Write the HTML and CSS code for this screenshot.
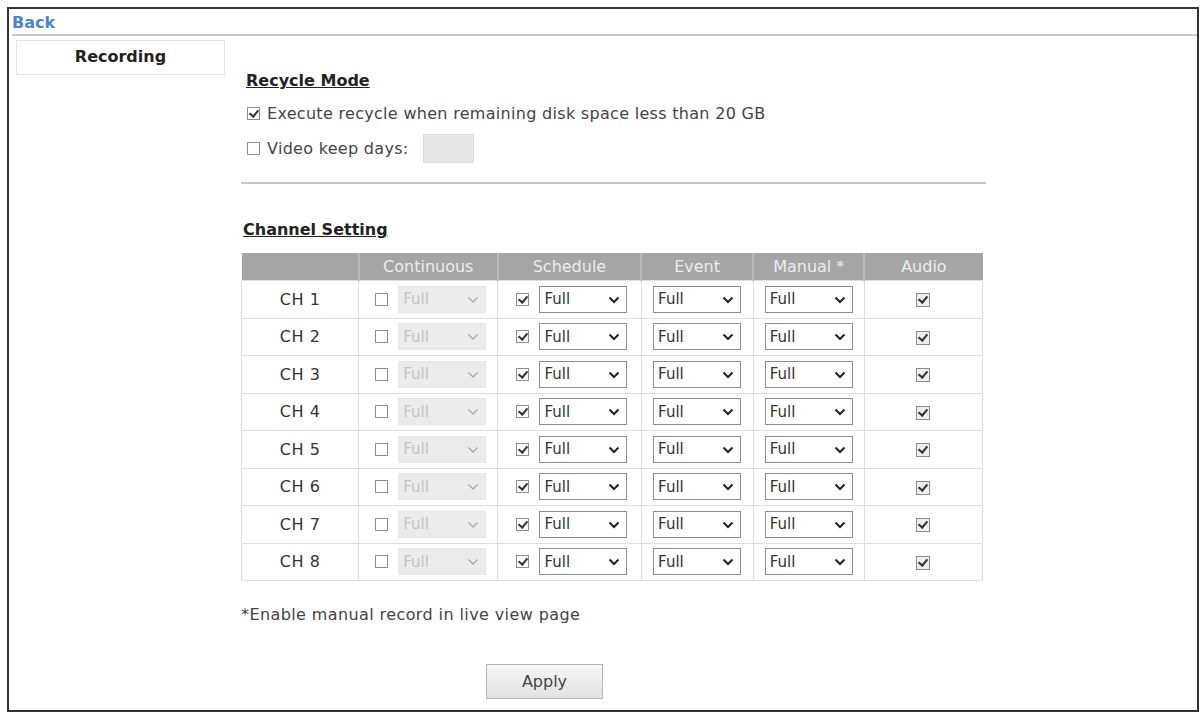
FILE: index.html
```html
<!DOCTYPE html>
<html lang="en">

<head>
    <meta charset="UTF-8">
    <title>Recording</title>
    <link rel="stylesheet" href="styles.css">
</head>

<body>
    <div class="frame">
        <!-- Top bar -->
        <div class="topbar">
            <a href="#" class="back">Back</a>
        </div>

        <div class="layout">
            <!-- Side menu -->
            <div class="sidebar">
                <div class="menuItem">Recording</div>
            </div>

            <!-- Main content -->
            <div class="content">
                <h3 class="sectionTitle">Recycle Mode</h3>
                <div class="option first">
                    <input type="checkbox" class="check" checked>
                    <span>Execute recycle when remaining disk space less than 20 GB</span>
                </div>
                <div class="option">
                    <input type="checkbox" class="check">
                    <span>Video keep days:</span>
                    <input type="text" class="daysInput" disabled>
                </div>

                <hr class="divider">

                <h3 class="sectionTitle channelTitle">Channel Setting</h3>
                <table class="channels">
                    <thead>
                        <tr>
                            <th class="colCh"></th>
                            <th class="colCont">Continuous</th>
                            <th class="colSched">Schedule</th>
                            <th class="colEvent">Event</th>
                            <th class="colManual">Manual *</th>
                            <th class="colAudio">Audio</th>
                        </tr>
                    </thead>
                    <tbody id="channelRows">
                    </tbody>
                </table>

                <p class="note">*Enable manual record in live view page</p>

                <div class="actions">
                    <button type="button" class="applyBtn">Apply</button>
                </div>
            </div>
        </div>
    </div>

    <script>
        // Build the 8 channel rows
        const rows = document.getElementById("channelRows");
        const arrow = '<svg class="arrow" width="12" height="8" viewBox="0 0 12 8"><path d="M1.5 1.5 L6 6 L10.5 1.5" fill="none" stroke="currentColor" stroke-width="2"/></svg>';

        function selectBox(disabled) {
            return `<span class="selWrap${disabled ? " off" : ""}">
                <select class="sel"${disabled ? " disabled" : ""}><option>Full</option></select>${arrow}
            </span>`;
        }

        for (let i = 1; i <= 8; i++) {
            const tr = document.createElement("tr");
            tr.innerHTML = `
                <td>CH ${i}</td>
                <td class="pair"><input type="checkbox" class="check">${selectBox(true)}</td>
                <td class="pair"><input type="checkbox" class="check" checked>${selectBox(false)}</td>
                <td>${selectBox(false)}</td>
                <td>${selectBox(false)}</td>
                <td><input type="checkbox" class="check audio" checked></td>
            `;
            rows.appendChild(tr);
        }
    </script>
</body>

</html>
```

FILE: styles.css
```css
/* General */
body {
    margin: 0;
    background-color: #fff;
    font-family: "DejaVu Sans", Verdana, sans-serif;
    font-size: 16px;
    color: #333;
}

.frame {
    margin: 7px 2px 3px 7px;
    height: 705px;
    border: 2px solid #333;
    box-sizing: border-box;
    display: flex;
    flex-direction: column;
}

/* Top bar */
.topbar {
    height: 23px;
    margin-left: 3px;
    border-bottom: 2px solid #c9c9c9;
    display: flex;
    align-items: flex-end;
    padding-bottom: 2px;
}

.back {
    color: #4a86c4;
    font-weight: bold;
    font-size: 16px;
    text-decoration: none;
    line-height: 18px;
}

.layout {
    display: flex;
    flex: 1;
}

/* Side menu */
.sidebar {
    width: 209px;
    margin: 4px 0 0 7px;
}

.menuItem {
    height: 35px;
    box-sizing: border-box;
    border: 1px solid #e2e2e2;
    text-align: center;
    font-weight: bold;
    line-height: 32px;
    color: #222;
}

/* Content */
.content {
    margin-left: 16px;
    width: 744px;
    display: flex;
    flex-direction: column;
}

.sectionTitle {
    margin: 35px 0 0 5px;
    font-size: 16px;
    font-weight: bold;
    text-decoration: underline;
    color: #222;
    line-height: 20px;
}

.option {
    display: flex;
    align-items: center;
    margin-left: 6px;
    height: 35px;
    color: #444;
    letter-spacing: 0.3px;
}

.option.first {
    margin-top: 5px;
}

.option span {
    margin-left: 7px;
}

.daysInput {
    width: 51px;
    height: 29px;
    margin-left: 14px;
    box-sizing: border-box;
    border: 1px solid #ddd;
    background-color: #e6e6e6;
}

.divider {
    margin: 16px 0 0 0;
    border: none;
    border-top: 2px solid #c9c9c9;
    width: 745px;
}

.channelTitle {
    margin-top: 36px;
    margin-left: 2px;
}

/* Checkboxes */
.check {
    appearance: none;
    width: 13px;
    height: 13px;
    margin: 0;
    border: 1px solid #8c8c8c;
    background-color: #fff;
    position: relative;
    vertical-align: middle;
}

.check:checked::after {
    content: "";
    position: absolute;
    left: 3px;
    top: 0px;
    width: 4px;
    height: 7px;
    border: solid #333;
    border-width: 0 2px 2px 0;
    transform: rotate(40deg);
}

/* Table */
.channels {
    margin-top: 13px;
    width: 742px;
    border-collapse: collapse;
    table-layout: fixed;
}

.channels th {
    height: 27px;
    padding: 0;
    background-color: #a5a5a5;
    color: #ececec;
    font-weight: normal;
    font-size: 16px;
    border-left: 2px solid #bababa;
}

.channels th:first-child {
    border-left: none;
}

.channels td {
    height: 36.5px;
    padding: 0;
    text-align: center;
    border: 1px solid #dedede;
    color: #333;
    letter-spacing: 0.6px;
}

.channels td.pair {
    padding-left: 5px;
}

.colCh { width: 116px; }
.colCont { width: 137px; }
.colSched { width: 141px; }
.colEvent { width: 110px; }
.colManual { width: 109px; }
.colAudio { width: 117px; }

.channels td .check + .selWrap {
    margin-left: 10px;
}

.selWrap {
    display: inline-block;
    position: relative;
    vertical-align: middle;
    color: #222;
    letter-spacing: 0;
}

.sel {
    appearance: none;
    width: 88px;
    height: 27px;
    padding: 0 0 0 4px;
    border: 1px solid #8d8d8d;
    background-color: #fff;
    font-family: "DejaVu Sans", Verdana, sans-serif;
    font-size: 15px;
    color: #333;
}

.selWrap .arrow {
    position: absolute;
    right: 7px;
    top: 10px;
    pointer-events: none;
}

.selWrap.off .sel {
    background-color: #e3e3e3;
    border-color: #dcdcdc;
    color: #aaa;
}

.selWrap.off .arrow {
    color: #aaa;
}

.selWrap.off .arrow path {
    stroke-width: 1.3;
}

.check.audio {
    width: 14px;
    height: 14px;
    background-color: #eee;
}

.note {
    margin: 24px 0 0 0;
    color: #444;
    letter-spacing: 0.4px;
}

.actions {
    margin-top: 40px;
    padding-left: 245px;
}

.applyBtn {
    width: 117px;
    height: 35px;
    border: 1px solid #b5b5b5;
    background: linear-gradient(#f6f6f6, #e2e2e2);
    font-family: "DejaVu Sans", Verdana, sans-serif;
    font-size: 16px;
    color: #444;
    cursor: pointer;
}
```
